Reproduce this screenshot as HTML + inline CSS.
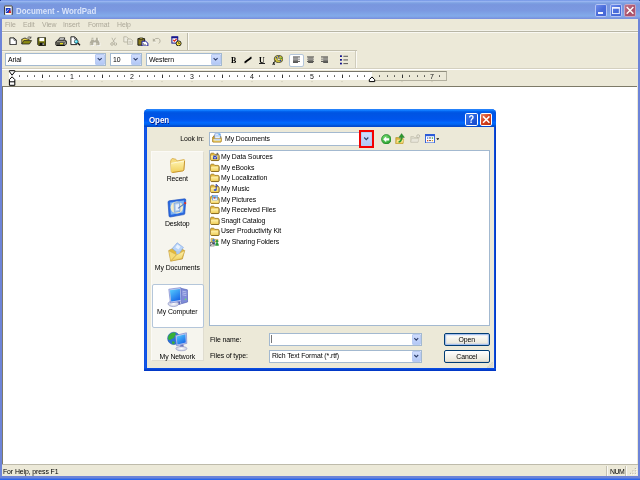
<!DOCTYPE html>
<html><head><meta charset="utf-8"><title>Document - WordPad</title>
<style>
html,body{margin:0;padding:0}
body{width:640px;height:480px;overflow:hidden;position:relative;background:#fff;font-family:"Liberation Sans",sans-serif;font-size:7.5px;letter-spacing:-0.1px;line-height:8px;color:#000}
div,span,svg{position:absolute;box-sizing:border-box}
.t{white-space:nowrap;height:8px}
#root{left:0;top:0;width:640px;height:480px;will-change:transform}
.t,#files{transform:scaleX(0.92);transform-origin:0 0}
.t[style*="text-align:center"]{transform-origin:50% 0}
.t[style*="text-align:right"]{transform-origin:100% 0}
.face{background:#ece9d8}
.combo{background:#fff;border:1px solid #a3b9d0}
.dd{background:linear-gradient(#cfdcfd,#b3c8f6);border:0.5px solid #b9cbf3;border-radius:1px}
.dd svg{left:0;top:0;width:100%;height:100%}
.hl{height:0.7px;background:#aca899}
.m{top:20.6px;color:#aca899}
.wl{height:0.7px;background:#fff}
</style></head><body>
<div id="root">

<!-- ===== main window ===== -->
<div id="main" style="left:0;top:0;width:640px;height:480px;background:#6d84d8"></div>
<div id="titlebar" style="left:0;top:0;width:640px;height:19px;background:linear-gradient(to bottom,#7697e7 0%,#7e9ee9 3%,#94afed 6%,#97b4f0 8%,#82a5e4 14%,#7c9fe2 17%,#7996de 25%,#7b99e1 56%,#82a9e9 81%,#80a5e7 89%,#7b96e1 94%,#7a93df 97%,#7187d8 100%)"></div>
<div class="t" id="title" style="left:16px;top:5.7px;font-weight:bold;font-size:8.6px;line-height:10px;height:10px;color:#d9e4fa;letter-spacing:0px">Document - WordPad</div>

<!-- caption -->
<svg style="left:3.8px;top:4.6px;width:9px;height:10.8px" viewBox="0 0 9 10.8"><rect x="0.6" y="0.8" width="7.6" height="9.4" rx="0.8" fill="#fff" stroke="#222" stroke-width="0.9"/><rect x="0.4" y="0.4" width="7.2" height="1.2" fill="#8a8a8a"/><rect x="1.8" y="3" width="4.8" height="5" fill="#1a3ac8"/><path d="M2.4 6.8 L4.6 4" stroke="#cfe0ff" stroke-width="0.9"/><path d="M4.4 8.2 L6 4.6 L7.2 8.2 Z" fill="#f02010"/><rect x="1.4" y="8.2" width="5.8" height="1.3" fill="#fff"/></svg>
<div style="left:595.4px;top:4px;width:12px;height:12.6px;border-radius:1.8px;border:1px solid #b4c4f4;background:linear-gradient(135deg,#6f8eec,#4a6cda 50%,#4465d6)"></div>
<div style="left:598.2px;top:11.6px;width:4.7px;height:2.2px;background:#f4f6ff"></div>
<div style="left:609.8px;top:4px;width:12px;height:12.6px;border-radius:1.8px;border:1px solid #b4c4f4;background:linear-gradient(135deg,#6f8eec,#4a6cda 50%,#4465d6)"></div>
<svg style="left:611px;top:6px;width:10px;height:9px" viewBox="0 0 10 9"><rect x="1.5" y="1.6" width="6.8" height="6" fill="none" stroke="#f4f6ff" stroke-width="0.9"/><rect x="1.05" y="1.1" width="7.7" height="1.6" fill="#f4f6ff"/></svg>
<div style="left:624.2px;top:4px;width:12px;height:12.6px;border-radius:1.8px;border:0.8px solid #c9a4be;background:linear-gradient(135deg,#c07488,#a8506a 60%,#b05a72)"></div>
<svg style="left:624.2px;top:4px;width:12px;height:12.6px" viewBox="0 0 12 12.6"><path d="M3.2 3.5 L8.9 9.2 M8.9 3.5 L3.2 9.2" stroke="#fff" stroke-width="1.4" stroke-linecap="square"/></svg>
<div class="face" id="client" style="left:2.4px;top:18.8px;width:635.2px;height:457.6px"></div>

<!-- menu -->
<div class="t m" style="left:5px">File</div>
<div class="t m" style="left:22.6px">Edit</div>
<div class="t m" style="left:41.9px">View</div>
<div class="t m" style="left:62.7px">Insert</div>
<div class="t m" style="left:88.4px">Format</div>
<div class="t m" style="left:116.8px">Help</div>
<div style="left:2px;top:30px;width:636px;height:1px;background:#f3f2e9"></div>
<div style="left:2px;top:31px;width:636px;height:1px;background:#b7b5a5"></div>
<div style="left:2px;top:32px;width:636px;height:1px;background:#f9f8f2"></div>

<!-- toolbar 1 -->
<div id="tb1sep" style="left:187px;top:33px;width:1px;height:17px;background:#bdbaa9"></div>
<div style="left:188px;top:33px;width:1px;height:17px;background:#fbfaf5"></div>
<!-- tb1icons -->
<svg style="left:8.6px;top:36.6px;width:8.4px;height:8.6px" viewBox="0 0 8.4 8.6"><path d="M0.9 0.9 H5 L7.3 3.2 V7.7 H0.9 Z" fill="#fff" stroke="#111" stroke-width="0.9"/><path d="M5 0.9 V3.2 H7.3" fill="none" stroke="#111" stroke-width="0.6"/></svg>
<svg style="left:21.4px;top:36.2px;width:11.2px;height:8.8px" viewBox="0 0 11.2 8.8"><path d="M0.8 8 V3 H2 L2.8 2.2 H5 L5.6 3 H8 V4.4" fill="#e8d44d" stroke="#222" stroke-width="0.8"/><path d="M0.8 8 L2.8 4.6 H10.6 L8.4 8 Z" fill="#8b8b12" stroke="#222" stroke-width="0.8" stroke-linejoin="round"/><path d="M6.6 1.4 Q8.4 0.2 9.6 1.6 M9.9 0.5 V2.2 H8.3" fill="none" stroke="#222" stroke-width="0.7"/></svg>
<svg style="left:36.7px;top:36.7px;width:9.6px;height:9.2px" viewBox="0 0 9.6 9.2"><path d="M0.8 0.8 H8.8 V8.4 H1.6 L0.8 7.6 Z" fill="#7c7c10" stroke="#111" stroke-width="0.9"/><rect x="2.4" y="0.9" width="4.8" height="3.3" fill="#fff"/><rect x="2.6" y="5.7" width="4.6" height="2.7" fill="#111"/><rect x="5.6" y="6.3" width="1.1" height="1.6" fill="#e8e8e8"/></svg>
<svg style="left:54.6px;top:36.6px;width:12.2px;height:9.4px" viewBox="0 0 12.2 9.4"><path d="M3.4 3.4 L4.6 0.9 H9.8 L8.8 3.4 Z" fill="#fff" stroke="#111" stroke-width="0.8"/><path d="M0.8 5 L2.6 3.2 H10.4 L11.4 4.4 V7 L9.8 8.6 H1.4 L0.8 7.8 Z" fill="#b9b7a8" stroke="#111" stroke-width="0.9" stroke-linejoin="round"/><path d="M0.8 5.2 H9.8 L11.4 4.2" fill="none" stroke="#111" stroke-width="0.7"/><rect x="1.2" y="5.6" width="8.4" height="2.6" fill="#55544a"/><rect x="5" y="6" width="3" height="1.4" fill="#e6dc1e"/><path d="M1.6 8.4 H9.6" stroke="#000" stroke-width="0.8"/></svg>
<svg style="left:69.5px;top:36px;width:11.4px;height:10px" viewBox="0 0 11.4 10"><path d="M0.9 0.8 H4.6 L6.8 3 V8.6 H0.9 Z" fill="#fff" stroke="#111" stroke-width="0.9"/><path d="M4.6 0.8 V3 H6.8" fill="none" stroke="#111" stroke-width="0.6"/><circle cx="6.3" cy="5.6" r="1.9" fill="#35d6f0" stroke="#333" stroke-width="0.7"/><circle cx="5.9" cy="5.2" r="0.8" fill="#d8f8ff"/><path d="M7.8 7 L10 9.2" stroke="#111" stroke-width="1.3"/></svg>
<svg style="left:88.6px;top:37px;width:12px;height:9.4px" viewBox="0 0 12 9.4"><path d="M2.6 0.8 H4.4 V2.4 L5.2 3.4 H6.2 L7 2.4 V0.8 H8.8 V2.6 L10.6 5.4 V8.2 H7 V5.6 H4.4 V8.2 H0.8 V5.4 L2.6 2.6 Z" fill="#fff" transform="translate(0.7,0.7)"/><path d="M2.6 0.8 H4.4 V2.4 L5.2 3.4 H6.2 L7 2.4 V0.8 H8.8 V2.6 L10.6 5.4 V8.2 H7 V5.6 H4.4 V8.2 H0.8 V5.4 L2.6 2.6 Z" fill="#b0ad9c"/><path d="M1.8 6.2 V7.6 M8 6.2 V7.6 M3.4 1.6 V3" stroke="#ece9d8" stroke-width="0.7"/></svg>
<svg style="left:110.4px;top:36.6px;width:7.4px;height:9.4px" viewBox="0 0 7.4 9.4"><path d="M1.9 0.8 L4.6 5.6 M5.5 0.8 L2.8 5.6" stroke="#b0ad9c" stroke-width="0.9" fill="none"/><circle cx="2" cy="7" r="1.3" fill="none" stroke="#b0ad9c" stroke-width="0.9"/><circle cx="5.4" cy="7" r="1.3" fill="none" stroke="#b0ad9c" stroke-width="0.9"/><path d="M2.6 1 L5.2 5.8" stroke="#fff" stroke-width="0.4" opacity="0.8" transform="translate(0.6,0.4)"/></svg>
<svg style="left:123px;top:36.3px;width:11.4px;height:9.4px" viewBox="0 0 11.4 9.4"><path d="M0.8 0.8 H3.6 L5.2 2.4 V6 H0.8 Z" fill="#eeece0" stroke="#b0ad9c" stroke-width="0.8"/><path d="M4.6 3 H7.8 L9.8 5 V8.4 H4.6 Z" fill="#eeece0" stroke="#b0ad9c" stroke-width="0.8"/><path d="M5.6 5.6 H8.6 M5.6 6.9 H8.6" stroke="#b0ad9c" stroke-width="0.5"/><path d="M10.4 5.4 V9 H5.2" stroke="#fff" stroke-width="0.5" fill="none"/></svg>
<svg style="left:136.8px;top:36.6px;width:11.8px;height:9.6px" viewBox="0 0 11.8 9.6"><path d="M0.9 1.6 H7.6 V8.2 H0.9 Z" fill="#8a7c1e" stroke="#111" stroke-width="0.9"/><path d="M2.6 0.9 H5.8 V2.4 H2.6 Z" fill="#c9b84a" stroke="#111" stroke-width="0.6"/><path d="M5 4.2 H8.6 L10.9 6.2 V9 H5 Z" fill="#fff" stroke="#1a1a9a" stroke-width="1"/><path d="M6.4 6 V7.8 H9" stroke="#444" stroke-width="0.6" fill="none"/></svg>
<svg style="left:152.4px;top:37.2px;width:9.8px;height:7.4px" viewBox="0 0 9.8 7.4"><path d="M1.2 3.6 Q3.4 0.6 6.4 1.4 Q8.8 2.4 8 5 Q7.6 6 6.6 6.4" fill="none" stroke="#b0ad9c" stroke-width="0.9"/><path d="M0.8 1.2 V4.6 H4 Z" fill="#b0ad9c"/><path d="M1.6 5.2 H4.4" stroke="#fff" stroke-width="0.5"/></svg>
<svg style="left:170.5px;top:35.6px;width:11px;height:10.6px" viewBox="0 0 11 10.6"><rect x="0.9" y="0.9" width="5.8" height="6.2" fill="#fff" stroke="#16168e" stroke-width="1"/><rect x="0.5" y="0.5" width="6.6" height="1.8" fill="#16168e"/><path d="M2.2 3.8 L3.4 5.2 L5.6 3" fill="none" stroke="#e02010" stroke-width="1.1"/><circle cx="7.6" cy="7.4" r="2.5" fill="#f4dc3c" stroke="#111" stroke-width="0.9"/><path d="M7.6 5.9 V7.5 H8.9" stroke="#111" stroke-width="0.6" fill="none"/></svg>
<!-- /tb1icons -->
<!-- format bar -->
<div style="left:2px;top:50px;width:355px;height:1px;background:#c3c0af"></div>
<div style="left:2px;top:51px;width:353px;height:1px;background:#f6f5ed"></div>
<div style="left:355px;top:51px;width:1px;height:17px;background:#cfccbc"></div>
<div style="left:356px;top:51px;width:1px;height:17px;background:#fbfaf5"></div>
<div class="combo" style="left:5px;top:53px;width:101px;height:13px"></div>
<div class="t" style="left:7.5px;top:55.6px">Arial</div>
<div class="dd" style="left:95px;top:54.3px;width:9.9px;height:11px"><svg viewBox="0 0 9.9 11.0"><path d="M2.15 3.70 L4.65 6.20 L7.15 3.70" fill="none" stroke="#2f3f6a" stroke-width="1.4"/></svg></div>
<div class="combo" style="left:110px;top:53px;width:32px;height:13px"></div>
<div class="t" style="left:112.7px;top:55.6px">10</div>
<div class="dd" style="left:131.2px;top:54.3px;width:9.7px;height:11px"><svg viewBox="0 0 9.7 11.0"><path d="M2.05 3.70 L4.55 6.20 L7.05 3.70" fill="none" stroke="#2f3f6a" stroke-width="1.4"/></svg></div>
<div class="combo" style="left:146px;top:53px;width:76px;height:13px"></div>
<div class="t" style="left:149px;top:55.6px">Western</div>
<div class="dd" style="left:211.2px;top:54.3px;width:9.7px;height:11px"><svg viewBox="0 0 9.7 11.0"><path d="M2.05 3.70 L4.55 6.20 L7.05 3.70" fill="none" stroke="#2f3f6a" stroke-width="1.4"/></svg></div>
<div class="t" style="left:231.1px;top:55.8px;font-family:'Liberation Serif',serif;font-weight:bold;font-size:8.6px;letter-spacing:0">B</div>
<div class="t" style="left:258.9px;top:55.8px;font-family:'Liberation Serif',serif;font-weight:bold;font-size:8.6px;letter-spacing:0">U</div>
<div style="left:259px;top:63px;width:6px;height:1px;background:#222"></div>
<svg style="left:243px;top:55px;width:10px;height:9px" viewBox="0 0 10 9"><path d="M1.9 7.3 L8.2 2.7" stroke="#000" stroke-width="1.7"/><path d="M1 7.7 H3.4 M6.8 2.3 H9" stroke="#000" stroke-width="0.6"/></svg>
<div style="left:289.4px;top:53.5px;width:14.2px;height:13px;background:#fff;border:1px solid #b4c6da;border-radius:2px"></div>

<!-- fbicons -->
<svg style="left:271.5px;top:55px;width:11.5px;height:9.6px" viewBox="0 0 11.5 9.6"><ellipse cx="6.6" cy="4" rx="4.3" ry="3.5" fill="#d8c93a" stroke="#3a3a20" stroke-width="0.8"/><ellipse cx="6.8" cy="4.4" rx="1.5" ry="1.1" fill="#ece9d8" stroke="#3a3a20" stroke-width="0.5"/><circle cx="4.4" cy="2.8" r="0.8" fill="#1830c0"/><circle cx="6.8" cy="1.8" r="0.8" fill="#1830c0"/><circle cx="9.2" cy="3.2" r="0.8" fill="#2a8a3a"/><circle cx="8.6" cy="5.8" r="0.8" fill="#1830c0"/><path d="M3.6 5.4 L1.4 8.6" stroke="#222" stroke-width="0.9"/><text x="0.2" y="9.6" font-size="4" font-weight="bold" font-family="Liberation Sans, sans-serif" fill="#111">A</text></svg>
<svg style="left:292.9px;top:56.2px;width:7.2px;height:7.2px" viewBox="0 0 7.2 7.2"><rect x="0.00" y="0.5" width="7.2" height="0.9" fill="#3a3a3a"/><rect x="0.00" y="1.6" width="5.0" height="0.9" fill="#555"/><rect x="0.00" y="2.7" width="7.2" height="0.9" fill="#777"/><rect x="0.00" y="3.8" width="5.0" height="0.9" fill="#555"/><rect x="0.00" y="4.9" width="7.2" height="0.9" fill="#3a3a3a"/><rect x="0.00" y="6.0" width="5.0" height="0.9" fill="#444"/></svg>
<svg style="left:306.8px;top:56.2px;width:7.2px;height:7.2px" viewBox="0 0 7.2 7.2"><rect x="0.00" y="0.5" width="7.2" height="0.9" fill="#3a3a3a"/><rect x="1.10" y="1.6" width="5.0" height="0.9" fill="#555"/><rect x="0.00" y="2.7" width="7.2" height="0.9" fill="#777"/><rect x="1.10" y="3.8" width="5.0" height="0.9" fill="#555"/><rect x="0.00" y="4.9" width="7.2" height="0.9" fill="#3a3a3a"/><rect x="1.10" y="6.0" width="5.0" height="0.9" fill="#444"/></svg>
<svg style="left:320.9px;top:56.2px;width:7.2px;height:7.2px" viewBox="0 0 7.2 7.2"><rect x="0.00" y="0.5" width="7.2" height="0.9" fill="#3a3a3a"/><rect x="2.20" y="1.6" width="5.0" height="0.9" fill="#555"/><rect x="0.00" y="2.7" width="7.2" height="0.9" fill="#777"/><rect x="2.20" y="3.8" width="5.0" height="0.9" fill="#555"/><rect x="0.00" y="4.9" width="7.2" height="0.9" fill="#3a3a3a"/><rect x="2.20" y="6.0" width="5.0" height="0.9" fill="#444"/></svg>
<svg style="left:339.8px;top:55.0px;width:8.6px;height:9.8px" viewBox="0 0 8.6 9.8"><rect x="0" y="0.3" width="1.9" height="1.7" fill="#10108c"/><rect x="3.4" y="0.8" width="5" height="0.9" fill="#444"/><rect x="0" y="4.0" width="1.9" height="1.7" fill="#10108c"/><rect x="3.4" y="4.5" width="5" height="0.9" fill="#444"/><rect x="0" y="7.7" width="1.9" height="1.7" fill="#10108c"/><rect x="3.4" y="8.2" width="5" height="0.9" fill="#444"/></svg>
<!-- /fbicons -->
<!-- ruler -->
<div class="hl" style="left:2.4px;top:68.1px;width:635.2px;background:#d4d0c0"></div>
<div class="wl" style="left:2.4px;top:68.8px;width:635.2px"></div>
<div style="left:9px;top:71px;width:363px;height:1px;background:#77756a"></div>
<div style="left:372px;top:71px;width:75px;height:10px;border:1px solid #b3b09f;border-top-color:#8f8d7d;border-left:0"></div>
<div style="left:9px;top:72px;width:363px;height:8.4px;background:#fff"></div>
<svg id="ruler" style="left:0;top:70px;width:460px;height:17px" viewBox="0 70 460 17"><rect x="19" y="75.4" width="1" height="1.3" fill="#222"/><rect x="27" y="75.4" width="1" height="1.3" fill="#222"/><rect x="34" y="75.4" width="1" height="1.3" fill="#222"/><rect x="42" y="74.6" width="1" height="3.4" fill="#333"/><rect x="41.65" y="81" width="0.7" height="1.1" fill="#b5b2a0"/><rect x="49" y="75.4" width="1" height="1.3" fill="#222"/><rect x="57" y="75.4" width="1" height="1.3" fill="#222"/><rect x="64" y="75.4" width="1" height="1.3" fill="#222"/><text x="72.0" y="79.1" font-size="7" text-anchor="middle" font-family="Liberation Sans, sans-serif" fill="#111">1</text><rect x="71.65" y="81" width="0.7" height="1.1" fill="#b5b2a0"/><rect x="79" y="75.4" width="1" height="1.3" fill="#222"/><rect x="87" y="75.4" width="1" height="1.3" fill="#222"/><rect x="94" y="75.4" width="1" height="1.3" fill="#222"/><rect x="102" y="74.6" width="1" height="3.4" fill="#333"/><rect x="101.65" y="81" width="0.7" height="1.1" fill="#b5b2a0"/><rect x="109" y="75.4" width="1" height="1.3" fill="#222"/><rect x="117" y="75.4" width="1" height="1.3" fill="#222"/><rect x="124" y="75.4" width="1" height="1.3" fill="#222"/><text x="132.0" y="79.1" font-size="7" text-anchor="middle" font-family="Liberation Sans, sans-serif" fill="#111">2</text><rect x="131.65" y="81" width="0.7" height="1.1" fill="#b5b2a0"/><rect x="139" y="75.4" width="1" height="1.3" fill="#222"/><rect x="147" y="75.4" width="1" height="1.3" fill="#222"/><rect x="154" y="75.4" width="1" height="1.3" fill="#222"/><rect x="162" y="74.6" width="1" height="3.4" fill="#333"/><rect x="161.65" y="81" width="0.7" height="1.1" fill="#b5b2a0"/><rect x="169" y="75.4" width="1" height="1.3" fill="#222"/><rect x="177" y="75.4" width="1" height="1.3" fill="#222"/><rect x="184" y="75.4" width="1" height="1.3" fill="#222"/><text x="192.0" y="79.1" font-size="7" text-anchor="middle" font-family="Liberation Sans, sans-serif" fill="#111">3</text><rect x="191.65" y="81" width="0.7" height="1.1" fill="#b5b2a0"/><rect x="199" y="75.4" width="1" height="1.3" fill="#222"/><rect x="207" y="75.4" width="1" height="1.3" fill="#222"/><rect x="214" y="75.4" width="1" height="1.3" fill="#222"/><rect x="222" y="74.6" width="1" height="3.4" fill="#333"/><rect x="221.65" y="81" width="0.7" height="1.1" fill="#b5b2a0"/><rect x="229" y="75.4" width="1" height="1.3" fill="#222"/><rect x="237" y="75.4" width="1" height="1.3" fill="#222"/><rect x="244" y="75.4" width="1" height="1.3" fill="#222"/><text x="252.0" y="79.1" font-size="7" text-anchor="middle" font-family="Liberation Sans, sans-serif" fill="#111">4</text><rect x="251.65" y="81" width="0.7" height="1.1" fill="#b5b2a0"/><rect x="259" y="75.4" width="1" height="1.3" fill="#222"/><rect x="267" y="75.4" width="1" height="1.3" fill="#222"/><rect x="274" y="75.4" width="1" height="1.3" fill="#222"/><rect x="282" y="74.6" width="1" height="3.4" fill="#333"/><rect x="281.65" y="81" width="0.7" height="1.1" fill="#b5b2a0"/><rect x="289" y="75.4" width="1" height="1.3" fill="#222"/><rect x="297" y="75.4" width="1" height="1.3" fill="#222"/><rect x="304" y="75.4" width="1" height="1.3" fill="#222"/><text x="312.0" y="79.1" font-size="7" text-anchor="middle" font-family="Liberation Sans, sans-serif" fill="#111">5</text><rect x="311.65" y="81" width="0.7" height="1.1" fill="#b5b2a0"/><rect x="319" y="75.4" width="1" height="1.3" fill="#222"/><rect x="327" y="75.4" width="1" height="1.3" fill="#222"/><rect x="334" y="75.4" width="1" height="1.3" fill="#222"/><rect x="342" y="74.6" width="1" height="3.4" fill="#333"/><rect x="341.65" y="81" width="0.7" height="1.1" fill="#b5b2a0"/><rect x="349" y="75.4" width="1" height="1.3" fill="#222"/><rect x="357" y="75.4" width="1" height="1.3" fill="#222"/><rect x="364" y="75.4" width="1" height="1.3" fill="#222"/><rect x="371.65" y="81" width="0.7" height="1.1" fill="#b5b2a0"/><rect x="379" y="75.4" width="1" height="1.3" fill="#222"/><rect x="387" y="75.4" width="1" height="1.3" fill="#222"/><rect x="394" y="75.4" width="1" height="1.3" fill="#222"/><rect x="402" y="74.6" width="1" height="3.4" fill="#333"/><rect x="401.65" y="81" width="0.7" height="1.1" fill="#b5b2a0"/><rect x="409" y="75.4" width="1" height="1.3" fill="#222"/><rect x="417" y="75.4" width="1" height="1.3" fill="#222"/><rect x="424" y="75.4" width="1" height="1.3" fill="#222"/><text x="432.0" y="79.1" font-size="7" text-anchor="middle" font-family="Liberation Sans, sans-serif" fill="#111">7</text><rect x="431.65" y="81" width="0.7" height="1.1" fill="#b5b2a0"/><rect x="439" y="75.4" width="1" height="1.3" fill="#222"/><path d="M9.4 70.7 H14.8 V71.6 L12.1 75.2 L9.4 71.6 Z" fill="#fff" stroke="#000" stroke-width="1" stroke-linejoin="round"/><path d="M12.1 76.8 L14.8 79.6 V85.3 H9.4 V79.6 Z M9.4 81.8 H14.8" fill="#fff" stroke="#000" stroke-width="1" stroke-linejoin="round"/><path d="M372 76.9 L374.7 79.7 V81.6 H369.3 V79.7 Z" fill="#fff" stroke="#000" stroke-width="1" stroke-linejoin="round"/></svg>

<!-- document area -->
<div id="doc" style="left:2.4px;top:86px;width:635px;height:378px;background:#fff;border-top:1px solid #7d7a68;border-left:1px solid #7d7a68"></div>

<!-- status bar -->
<div style="left:2px;top:464px;width:636px;height:1px;background:#bebbab"></div>
<div style="left:606px;top:466px;width:1px;height:10px;background:#c5c2b2"></div><div style="left:607px;top:466px;width:1px;height:10px;background:#faf9f4"></div>
<div style="left:625px;top:466px;width:1px;height:10px;background:#c5c2b2"></div><div style="left:626px;top:466px;width:1px;height:10px;background:#faf9f4"></div>
<svg style="left:629px;top:467px;width:9px;height:9px" viewBox="0 0 9 9"><g fill="#fff"><rect x="6.4" y="1.6" width="1.3" height="1.3"/><rect x="4" y="4" width="1.3" height="1.3"/><rect x="6.4" y="4" width="1.3" height="1.3"/><rect x="1.6" y="6.4" width="1.3" height="1.3"/><rect x="4" y="6.4" width="1.3" height="1.3"/><rect x="6.4" y="6.4" width="1.3" height="1.3"/></g><g fill="#b8b4a2"><rect x="5.8" y="1" width="1.1" height="1.1"/><rect x="3.4" y="3.4" width="1.1" height="1.1"/><rect x="5.8" y="3.4" width="1.1" height="1.1"/><rect x="1" y="5.8" width="1.1" height="1.1"/><rect x="3.4" y="5.8" width="1.1" height="1.1"/><rect x="5.8" y="5.8" width="1.1" height="1.1"/></g></svg>
<div style="left:0;top:478px;width:640px;height:1px;background:#4f76e0"></div>
<div style="left:0;top:479px;width:640px;height:1px;background:#2a66ea"></div>
<div style="left:0;top:0;width:1px;height:1px;background:#23409f"></div><div style="left:639px;top:0;width:1px;height:1px;background:#23409f"></div>

<div class="t" style="left:2.6px;top:467.5px">For Help, press F1</div>
<div class="t" style="left:610px;top:467.5px;letter-spacing:-0.5px">NUM</div>


<!-- ===== Open dialog ===== -->
<div id="dlg" style="left:144px;top:108.7px;width:352px;height:262px;border-radius:4.5px 4.5px 0 0;background:linear-gradient(to right,#0a46d8 0,#1a5cea 1px,#0b50e6 2.5px,#0b50e6 349.5px,#0a46d8 351px,#0030b0 352px)"></div>
<div id="dlgtitle" style="left:144px;top:108.7px;width:352px;height:18.5px;border-radius:4.5px 4.5px 0 0;background:linear-gradient(to bottom,#0058ee 0%,#3593ff 4%,#288eff 6%,#127dff 8%,#036ffc 10%,#0262ee 14%,#0057e5 20%,#0054e3 24%,#0055eb 56%,#005bf5 66%,#026afe 76%,#0062ef 86%,#0052d6 92%,#0048c8 96%,#0a4ed8 100%)"></div>
<div id="dlgbot" style="left:144px;top:368px;width:352px;height:2.7px;background:linear-gradient(to bottom,#0b50e6,#0034c0)"></div>
<div class="t" style="left:149px;top:114.6px;font-weight:bold;font-size:8.6px;line-height:10px;height:10px;color:#fff;transform:scaleX(0.93);transform-origin:0 0;text-shadow:0.6px 0.6px 0 #0a1883">Open</div>
<!-- help / close buttons -->
<div style="left:465.2px;top:112.5px;width:12.6px;height:13.1px;border-radius:1.8px;border:0.7px solid #fff;background:linear-gradient(135deg,#3a7af0,#1546c8)"></div>
<div class="t" style="left:465.2px;top:113.5px;width:12.6px;height:11px;line-height:11px;text-align:center;color:#fff;font-weight:bold;font-size:10px">?</div>
<div style="left:479.7px;top:112.5px;width:12.6px;height:13.1px;border-radius:1.8px;border:0.7px solid #fff;background:linear-gradient(135deg,#e88a6c,#d8431f 45%,#b8300f)"></div>
<svg style="left:479.7px;top:112.5px;width:12.6px;height:13.1px" viewBox="0 0 12.6 13.1"><path d="M3.6 3.9 L8.9 9.2 M8.9 3.9 L3.6 9.2" stroke="#fff" stroke-width="1.5" stroke-linecap="square"/></svg>

<div class="face" id="dlgbody" style="left:146.5px;top:127.2px;width:347.2px;height:240.8px"></div>

<!-- look in row -->
<div class="t" style="left:160px;top:135px;width:43.8px;text-align:right">Look in:</div>
<div class="combo" style="left:208.7px;top:132px;width:165px;height:13.7px"></div>
<div class="t" style="left:225.1px;top:135px">My Documents</div>
<div class="dd" style="left:361px;top:132px;width:11px;height:14px"><svg viewBox="0 0 11.0 14.0"><path d="M2.70 5.20 L5.20 7.70 L7.70 5.20" fill="none" stroke="#2f3f6a" stroke-width="1.4"/></svg></div>
<div style="left:359px;top:130px;width:15px;height:18px;border:2px solid #f40000"></div>

<!-- places bar -->
<div style="left:151px;top:150.7px;width:52.6px;height:210px;background:#f6f5ee;border:0.7px solid #fbfaf6;border-right-color:#e0ddd0;border-bottom-color:#e0ddd0"></div>
<div style="left:152px;top:284.4px;width:51.5px;height:43.2px;background:#fff;border:1px solid #b4c6da;border-radius:2px"></div>
<div class="t" style="left:151px;top:175.3px;width:52.6px;text-align:center">Recent</div>
<div class="t" style="left:151px;top:219.8px;width:52.6px;text-align:center">Desktop</div>
<div class="t" style="left:151px;top:264px;width:52.6px;text-align:center">My Documents</div>
<div class="t" style="left:151px;top:308px;width:52.6px;text-align:center">My Computer</div>
<div class="t" style="left:151px;top:353px;width:52.6px;text-align:center;height:7.6px;overflow:hidden">My Network</div>

<!-- file list -->
<div class="combo" style="left:208.7px;top:150.2px;width:281.7px;height:176.3px"></div>
<div id="files" style="left:220.6px;top:152.1px;line-height:10.625px;white-space:nowrap">My Data Sources<br>My eBooks<br>My Localization<br>My Music<br>My Pictures<br>My Received Files<br>SnagIt Catalog<br>User Productivity Kit<br>My Sharing Folders</div>

<!-- dlgicons -->
<svg style="left:0;top:0;width:0;height:0"><defs><linearGradient id="gf" x1="0" y1="0" x2="0" y2="1"><stop offset="0" stop-color="#fff3b0"/><stop offset="1" stop-color="#f0cf5a"/></linearGradient><linearGradient id="gb" x1="0" y1="0" x2="1" y2="1"><stop offset="0" stop-color="#9fd0ff"/><stop offset="1" stop-color="#2f7ce8"/></linearGradient><radialGradient id="gg" cx="0.4" cy="0.35" r="0.7"><stop offset="0" stop-color="#7ee07a"/><stop offset="1" stop-color="#1f9a26"/></radialGradient><radialGradient id="gs" cx="0.5" cy="0.5" r="0.6"><stop offset="0" stop-color="#ffffff"/><stop offset="1" stop-color="#b8bcd8"/></radialGradient><linearGradient id="gscr" x1="0" y1="0" x2="0.6" y2="1"><stop offset="0" stop-color="#58d0ff"/><stop offset="1" stop-color="#1a6ae8"/></linearGradient></defs></svg>
<svg style="left:210px;top:152.2px;width:10px;height:9.4px" viewBox="0 0 10 9.4" ><path d="M0.6 2.2 Q0.6 1.2 1.6 1.2 H3.4 Q4 1.2 4.4 1.8 L4.8 2.4 H8 Q8.9 2.4 8.9 3.3 V7.6 Q8.9 8.4 8 8.4 H1.5 Q0.6 8.4 0.6 7.6 Z" fill="#e4b93c" stroke="#9a7418" stroke-width="0.8"/><path d="M1 4 Q1 3.5 1.6 3.5 H8 Q8.5 3.5 8.5 4 V7.4 Q8.5 8 8 8 H1.6 Q1 8 1 7.4 Z" fill="url(#gf)"/><path d="M1.2 8.6 H8.2 Q9.2 8.6 9.2 7.6 V3.6" fill="none" stroke="#6e5210" stroke-width="0.6"/><rect x="3" y="3.6" width="4.2" height="3.6" fill="#2a3eb0"/><path d="M3.6 4.6 L5 6.4 L6.6 4.2" stroke="#fff" stroke-width="0.7" fill="none"/><rect x="6.6" y="0.8" width="1.6" height="2.4" fill="#6a6a6a"/></svg>
<svg style="left:210px;top:162.825px;width:10px;height:9.4px" viewBox="0 0 10 9.4" ><path d="M0.6 2.2 Q0.6 1.2 1.6 1.2 H3.4 Q4 1.2 4.4 1.8 L4.8 2.4 H8 Q8.9 2.4 8.9 3.3 V7.6 Q8.9 8.4 8 8.4 H1.5 Q0.6 8.4 0.6 7.6 Z" fill="#e4b93c" stroke="#9a7418" stroke-width="0.8"/><path d="M1 4 Q1 3.5 1.6 3.5 H8 Q8.5 3.5 8.5 4 V7.4 Q8.5 8 8 8 H1.6 Q1 8 1 7.4 Z" fill="url(#gf)"/><path d="M1.2 8.6 H8.2 Q9.2 8.6 9.2 7.6 V3.6" fill="none" stroke="#6e5210" stroke-width="0.6"/></svg>
<svg style="left:210px;top:173.45px;width:10px;height:9.4px" viewBox="0 0 10 9.4" ><path d="M0.6 2.2 Q0.6 1.2 1.6 1.2 H3.4 Q4 1.2 4.4 1.8 L4.8 2.4 H8 Q8.9 2.4 8.9 3.3 V7.6 Q8.9 8.4 8 8.4 H1.5 Q0.6 8.4 0.6 7.6 Z" fill="#e4b93c" stroke="#9a7418" stroke-width="0.8"/><path d="M1 4 Q1 3.5 1.6 3.5 H8 Q8.5 3.5 8.5 4 V7.4 Q8.5 8 8 8 H1.6 Q1 8 1 7.4 Z" fill="url(#gf)"/><path d="M1.2 8.6 H8.2 Q9.2 8.6 9.2 7.6 V3.6" fill="none" stroke="#6e5210" stroke-width="0.6"/></svg>
<svg style="left:210px;top:184.075px;width:10px;height:9.4px" viewBox="0 0 10 9.4" ><path d="M0.6 2.2 Q0.6 1.2 1.6 1.2 H3.4 Q4 1.2 4.4 1.8 L4.8 2.4 H8 Q8.9 2.4 8.9 3.3 V7.6 Q8.9 8.4 8 8.4 H1.5 Q0.6 8.4 0.6 7.6 Z" fill="#e4b93c" stroke="#9a7418" stroke-width="0.8"/><path d="M1 4 Q1 3.5 1.6 3.5 H8 Q8.5 3.5 8.5 4 V7.4 Q8.5 8 8 8 H1.6 Q1 8 1 7.4 Z" fill="url(#gf)"/><path d="M1.2 8.6 H8.2 Q9.2 8.6 9.2 7.6 V3.6" fill="none" stroke="#6e5210" stroke-width="0.6"/><path d="M6.2 0.3 V5.8" stroke="#1a2a9c" stroke-width="0.9"/><path d="M6.2 0.3 L8.2 2.4" stroke="#1a2a9c" stroke-width="0.9"/><ellipse cx="5.2" cy="6" rx="1.5" ry="1.1" fill="#3a5ad8"/></svg>
<svg style="left:210px;top:194.7px;width:10px;height:9.4px" viewBox="0 0 10 9.4" ><path d="M0.6 2.2 Q0.6 1.2 1.6 1.2 H3.4 Q4 1.2 4.4 1.8 L4.8 2.4 H8 Q8.9 2.4 8.9 3.3 V7.6 Q8.9 8.4 8 8.4 H1.5 Q0.6 8.4 0.6 7.6 Z" fill="#e4b93c" stroke="#9a7418" stroke-width="0.8"/><path d="M1 4 Q1 3.5 1.6 3.5 H8 Q8.5 3.5 8.5 4 V7.4 Q8.5 8 8 8 H1.6 Q1 8 1 7.4 Z" fill="url(#gf)"/><path d="M1.2 8.6 H8.2 Q9.2 8.6 9.2 7.6 V3.6" fill="none" stroke="#6e5210" stroke-width="0.6"/><rect x="2.4" y="0.6" width="5" height="4.6" fill="#fff" stroke="#4a78c8" stroke-width="0.6"/><rect x="3" y="1.2" width="3.8" height="2.2" fill="#58a8e8"/><circle cx="4.6" cy="2.8" r="0.9" fill="#e05030"/><path d="M0.9 5.6 H8.7 V7.5 Q8.7 8.2 8 8.2 H1.6 Q0.9 8.2 0.9 7.5 Z" fill="url(#gf)"/></svg>
<svg style="left:210px;top:205.325px;width:10px;height:9.4px" viewBox="0 0 10 9.4" ><path d="M0.6 2.2 Q0.6 1.2 1.6 1.2 H3.4 Q4 1.2 4.4 1.8 L4.8 2.4 H8 Q8.9 2.4 8.9 3.3 V7.6 Q8.9 8.4 8 8.4 H1.5 Q0.6 8.4 0.6 7.6 Z" fill="#e4b93c" stroke="#9a7418" stroke-width="0.8"/><path d="M1 4 Q1 3.5 1.6 3.5 H8 Q8.5 3.5 8.5 4 V7.4 Q8.5 8 8 8 H1.6 Q1 8 1 7.4 Z" fill="url(#gf)"/><path d="M1.2 8.6 H8.2 Q9.2 8.6 9.2 7.6 V3.6" fill="none" stroke="#6e5210" stroke-width="0.6"/></svg>
<svg style="left:210px;top:215.95px;width:10px;height:9.4px" viewBox="0 0 10 9.4" ><path d="M0.6 2.2 Q0.6 1.2 1.6 1.2 H3.4 Q4 1.2 4.4 1.8 L4.8 2.4 H8 Q8.9 2.4 8.9 3.3 V7.6 Q8.9 8.4 8 8.4 H1.5 Q0.6 8.4 0.6 7.6 Z" fill="#e4b93c" stroke="#9a7418" stroke-width="0.8"/><path d="M1 4 Q1 3.5 1.6 3.5 H8 Q8.5 3.5 8.5 4 V7.4 Q8.5 8 8 8 H1.6 Q1 8 1 7.4 Z" fill="url(#gf)"/><path d="M1.2 8.6 H8.2 Q9.2 8.6 9.2 7.6 V3.6" fill="none" stroke="#6e5210" stroke-width="0.6"/></svg>
<svg style="left:210px;top:226.575px;width:10px;height:9.4px" viewBox="0 0 10 9.4" ><path d="M0.6 2.2 Q0.6 1.2 1.6 1.2 H3.4 Q4 1.2 4.4 1.8 L4.8 2.4 H8 Q8.9 2.4 8.9 3.3 V7.6 Q8.9 8.4 8 8.4 H1.5 Q0.6 8.4 0.6 7.6 Z" fill="#e4b93c" stroke="#9a7418" stroke-width="0.8"/><path d="M1 4 Q1 3.5 1.6 3.5 H8 Q8.5 3.5 8.5 4 V7.4 Q8.5 8 8 8 H1.6 Q1 8 1 7.4 Z" fill="url(#gf)"/><path d="M1.2 8.6 H8.2 Q9.2 8.6 9.2 7.6 V3.6" fill="none" stroke="#6e5210" stroke-width="0.6"/></svg>
<svg style="left:210px;top:237.2px;width:10px;height:9.4px" viewBox="0 0 10 9.4" ><path d="M1 1.6 H4 L4.8 2.4 H8 V5 H1 Z" fill="#ecd068" stroke="#b08a20" stroke-width="0.5"/><circle cx="3.6" cy="3.4" r="1.3" fill="#3a78d8"/><path d="M1.8 7.6 Q1.8 4.8 3.6 4.8 Q5.4 4.8 5.4 7.6 Z" fill="#3a78d8"/><circle cx="7" cy="4.4" r="1.3" fill="#2e9a3a"/><path d="M5.2 8.8 Q5.2 5.8 7 5.8 Q8.8 5.8 8.8 8.8 Z" fill="#2e9a3a"/><rect x="0.3" y="5.2" width="3.8" height="3.8" fill="#fff" stroke="#333" stroke-width="0.5"/><path d="M1 8.4 L3.2 6.2 M1.8 6 H3.4 V7.6" stroke="#111" stroke-width="0.7" fill="none"/></svg>
<svg style="left:211.8px;top:133.2px;width:10.8px;height:10.4px" viewBox="0 0 10.8 10.4" ><path d="M0.8 4 L2 2.8 H4 L4.6 3.6 H9 V8.8 H0.8 Z" fill="#dca92c" stroke="#94690e" stroke-width="0.8"/><path d="M2.8 0.8 H8.2 V6.2 H2.8 Z" fill="#fff" stroke="#5a8ad8" stroke-width="0.7"/><path d="M5.6 0.8 H8.2 V3 Z" fill="#58b0f0"/><path d="M3.6 2.6 H7.2 M3.6 3.8 H7.4" stroke="#8ab0e8" stroke-width="0.6"/><path d="M0.9 5.6 H9.6 L9 9 H0.9 Z" fill="url(#gf)" stroke="#a87a18" stroke-width="0.6"/><rect x="2.6" y="5.9" width="5.4" height="1.6" fill="#c0d4f8"/></svg>
<svg style="left:380.6px;top:133.5px;width:10.6px;height:10.6px" viewBox="0 0 10.6 10.6" ><circle cx="5.3" cy="5.3" r="4.8" fill="url(#gg)" stroke="#1a7a20" stroke-width="0.6"/><path d="M2.2 5.3 L5.2 2.4 V4.2 H8.2 V6.4 H5.2 V8.2 Z" fill="#fff"/></svg>
<svg style="left:395.4px;top:133px;width:10px;height:11.4px" viewBox="0 0 10 11.4" ><path d="M0.8 4.6 H3.4 L4 5.4 H8 V10.6 H0.8 Z" fill="#e2b93c" stroke="#a88220" stroke-width="0.6"/><path d="M1.8 6.6 H8.8 L7.8 10.6 H0.8 Z" fill="url(#gf)" stroke="#c09a30" stroke-width="0.4"/><path d="M3.6 9 Q6.8 8.4 6.6 4.2" fill="none" stroke="#2a9a2e" stroke-width="1.6"/><path d="M3.8 4.4 L6.6 0.6 L9.4 4.4 Z" fill="#2a9a2e" stroke="#1a6a1e" stroke-width="0.4"/></svg>
<svg style="left:410.2px;top:134.4px;width:10.6px;height:9.4px" viewBox="0 0 10.6 9.4" ><path d="M0.8 2.6 H3.6 L4.4 3.6 H8 V8.2 H0.8 Z" fill="#dedbcc" stroke="#bcb9a8" stroke-width="0.6"/><path d="M1.6 4.6 H9 L8 8.2 H0.8 Z" fill="#e8e6da" stroke="#c4c1b0" stroke-width="0.5"/><circle cx="8.2" cy="2.2" r="1.5" fill="#e8e6da" stroke="#b0ad9c" stroke-width="0.7"/></svg>
<svg style="left:424.6px;top:134px;width:10px;height:9.4px" viewBox="0 0 10 9.4" ><rect x="0.5" y="0.5" width="9" height="8.4" fill="#fff" stroke="#2a5ad8" stroke-width="0.9"/><rect x="0.2" y="0.2" width="9.6" height="2" fill="#2a5ad8"/><rect x="2" y="3.4" width="1.3" height="1.3" fill="#3a6ad8"/><rect x="4.2" y="3.4" width="1.6" height="1.1" fill="#444"/><rect x="6.8" y="3.4" width="1.3" height="1.3" fill="#2e9a3a"/><rect x="2" y="6" width="1.3" height="1.3" fill="#e05020"/><rect x="4.2" y="6" width="1.6" height="1.1" fill="#444"/><rect x="6.8" y="6" width="1.3" height="1.3" fill="#e8a020"/></svg>
<svg style="left:435.8px;top:137.8px;width:3.6px;height:2.4px" viewBox="0 0 3.6 2.4" ><path d="M0.2 0.2 H3.4 L1.8 2.1 Z" fill="#111"/></svg>
<svg style="left:169px;top:156px;width:17.6px;height:17.4px" viewBox="0 0 17.6 17.4" ><path d="M1.6 5.2 L2.4 3.2 Q2.8 2.4 3.8 2.6 L6.6 3.2 Q7.2 3.4 7.6 4.2 L8 5 L14.6 3.6 Q15.6 3.4 15.6 4.4 L14.8 13.6 Q14.8 14.6 13.8 14.8 L3.6 16.4 Q2.4 16.6 2.2 15.4 Z" fill="#f6dc80" stroke="#d0a038" stroke-width="0.7"/><path d="M2 7.2 L15.4 4.8 L14.6 13.8 Q14.6 14.6 13.8 14.8 L3.6 16.4 Q2.4 16.6 2.3 15.4 Z" fill="url(#gf)"/><path d="M2.2 7.3 L15.2 5" stroke="#fffbe6" stroke-width="0.8"/><path d="M3.4 16.5 L13.8 14.9 Q14.8 14.7 14.9 13.6 L15.6 5" fill="none" stroke="#c08a20" stroke-width="0.8"/></svg>
<svg style="left:166.6px;top:198.2px;width:21px;height:20px" viewBox="0 0 21 20" ><path d="M2.2 2.8 L17.6 0.8 Q18.8 0.8 18.8 2 L17.8 15.4 Q17.8 16.4 16.8 16.6 L3.4 19 Q2.2 19.2 2 18 L1 4.2 Q1 3 2.2 2.8 Z" fill="#2a6ae0" stroke="#1a4ab8" stroke-width="0.6"/><path d="M3 4.4 L17 2.6 L16.2 14.6 L3.8 16.8 Z" fill="#7fb4f4"/><ellipse cx="9.8" cy="9.6" rx="6.2" ry="6" fill="#f4ecc8"/><path d="M7 5 L12.6 4.2 L13 13.4 L7.4 14.4 Z" fill="#a8c8f0" stroke="#5a8ad0" stroke-width="0.5"/><path d="M8.6 6.4 L12 6 L12.2 12 L8.8 12.6 Z" fill="#e8f0fc"/><path d="M11 10.4 L17.6 5.6" stroke="#5a7ab8" stroke-width="1.1"/><circle cx="18.2" cy="5.2" r="1.1" fill="#e03020"/></svg>
<svg style="left:167.4px;top:242.4px;width:19.6px;height:20.4px" viewBox="0 0 19.6 20.4" ><path d="M2 8.4 L9.8 4.4 L17.6 8.6 L15.4 17 L4 19 Z" fill="#e2b93c" stroke="#b89030" stroke-width="0.6"/><path d="M5.2 6.6 L10.2 0.8 L16.4 5.4 L12 11.8 Z" fill="#b8d4f8" stroke="#7aa0e0" stroke-width="0.6"/><path d="M8.4 5.2 L10.4 2.6 L13.4 4.8 L11.4 7.4 Z" fill="#e8f2ff"/><path d="M1.6 8.6 L9.6 12.8 L3.6 19.2 Z" fill="#f6dc78" stroke="#c8a040" stroke-width="0.5"/><path d="M17.8 8.6 L9.6 12.8 L3.6 19.2 L14.8 16.6 Z" fill="url(#gf)" stroke="#c8a040" stroke-width="0.5"/><path d="M9 9.6 L13 9 L12.4 11.4 L9.6 12.6 Z" fill="#a8c8f4"/></svg>
<svg style="left:167px;top:287.4px;width:21.6px;height:20.4px" viewBox="0 0 21.6 20.4" ><path d="M13.6 1.2 L20.4 2.8 L20.6 15 L14.4 16.8 Z" fill="#7f8cd8" stroke="#4a58b0" stroke-width="0.6"/><path d="M15.4 4.2 L19.4 5 M15.4 6 L19.4 6.8 M15.4 7.8 L19.4 8.6" stroke="#c8d0f4" stroke-width="0.7"/><circle cx="18.6" cy="12.2" r="0.7" fill="#60f060"/><path d="M7.4 13.4 L12.6 12.8 L13.8 17.6 L8.2 18.4 Z" fill="#5a66b8"/><ellipse cx="6.4" cy="16.8" rx="5.4" ry="2.8" fill="url(#gs)" stroke="#8890c8" stroke-width="0.6"/><path d="M1.8 2.2 L13.8 0.6 L14.4 14.2 L3.4 16 Z" fill="#c4ccf0" stroke="#6a78c8" stroke-width="0.6"/><path d="M2.9 3.3 L12.9 1.9 L13.4 13 L4.2 14.5 Z" fill="url(#gscr)"/></svg>
<svg style="left:167px;top:331.4px;width:21.6px;height:20.4px" viewBox="0 0 21.6 20.4" ><circle cx="6.8" cy="7.4" r="6.2" fill="#2a72d8" stroke="#1a4aa8" stroke-width="0.5"/><path d="M2.4 3.6 Q5 0.8 8.4 1.6 Q9.6 3.6 7.6 5.4 Q6.8 7.6 4.6 8 Q2.8 9.8 1.2 8.6 Q0.4 6 2.4 3.6 Z" fill="#38b038"/><path d="M5 10.4 Q7 9.8 8 11.6 Q7.4 13.2 5.8 13.4 Q4.6 12 5 10.4 Z" fill="#38b038"/><path d="M8.4 4.4 L19.4 1.8 L19.8 12.4 L9.6 14.8 Z" fill="#c4ccf0" stroke="#6a78c8" stroke-width="0.6"/><path d="M9.6 5.4 L18.4 3.2 L18.8 11.6 L10.4 13.6 Z" fill="url(#gscr)"/><path d="M12.8 14.4 L16.4 13.6 L16.8 16 L12.6 16.8 Z" fill="#6a76c0"/><ellipse cx="14.4" cy="17.6" rx="5.6" ry="2.2" fill="url(#gs)" stroke="#8890c0" stroke-width="0.5"/></svg>
<!-- /dlgicons -->
<!-- bottom rows -->
<div class="t" style="left:210px;top:336px">File name:</div>
<div class="t" style="left:210px;top:352.3px">Files of type:</div>
<div class="combo" style="left:269px;top:332.5px;width:153.3px;height:13.2px"></div>
<div style="left:271px;top:335px;width:1px;height:8px;background:#777"></div>
<div class="dd" style="left:412.4px;top:333.5px;width:9px;height:11.2px"><svg viewBox="0 0 9.0 11.2"><path d="M1.70 3.80 L4.20 6.30 L6.70 3.80" fill="none" stroke="#2f3f6a" stroke-width="1.4"/></svg></div>
<div class="combo" style="left:269px;top:350.2px;width:153.3px;height:12.4px"></div>
<div class="t" style="left:271.9px;top:352.3px">Rich Text Format (*.rtf)</div>
<div class="dd" style="left:412.4px;top:351px;width:9px;height:10.8px"><svg viewBox="0 0 9.0 10.8"><path d="M1.70 3.60 L4.20 6.10 L6.70 3.60" fill="none" stroke="#2f3f6a" stroke-width="1.4"/></svg></div>

<div class="btn" style="left:444px;top:333.3px;width:45.5px;height:12.6px;border:0.8px solid #003c74;border-radius:2px;background:linear-gradient(#fff,#ece9dc 85%,#d6d0c5);box-shadow:inset 0 0 0 1.2px #a6c0ee"></div>
<div class="t" style="left:444px;top:336.3px;width:45.5px;text-align:center">Open</div>
<div class="btn" style="left:444px;top:349.8px;width:45.5px;height:12.8px;border:0.8px solid #003c74;border-radius:2px;background:linear-gradient(#fff,#ece9dc 85%,#d6d0c5)"></div>
<div class="t" style="left:444px;top:352.8px;width:45.5px;text-align:center">Cancel</div>
<svg style="left:485.5px;top:362px;width:8px;height:6.4px" viewBox="0 0 8 6.4"><g fill="#b8b4a2"><rect x="5.6" y="0.6" width="1.2" height="1.2"/><rect x="3.6" y="2.6" width="1.2" height="1.2"/><rect x="5.6" y="2.6" width="1.2" height="1.2"/><rect x="1.6" y="4.6" width="1.2" height="1.2"/><rect x="3.6" y="4.6" width="1.2" height="1.2"/><rect x="5.6" y="4.6" width="1.2" height="1.2"/></g><g fill="#fff"><rect x="6.4" y="1.4" width="0.7" height="0.7"/><rect x="4.4" y="3.4" width="0.7" height="0.7"/><rect x="6.4" y="3.4" width="0.7" height="0.7"/><rect x="2.4" y="5.4" width="0.7" height="0.7"/><rect x="4.4" y="5.4" width="0.7" height="0.7"/><rect x="6.4" y="5.4" width="0.7" height="0.7"/></g></svg>

</div>
</body></html>
